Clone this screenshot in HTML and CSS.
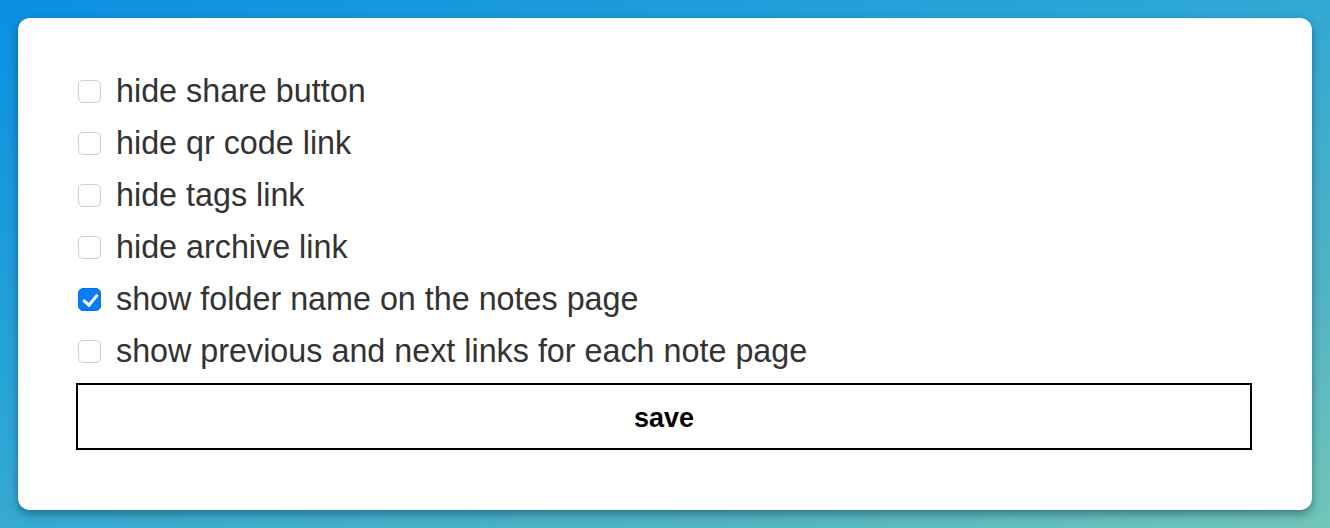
FILE: index.html
```html
<!DOCTYPE html>
<html lang="en">
<head>
  <meta charset="UTF-8" />
  <title>Settings</title>
  <link rel="stylesheet" href="styles.css">
</head>
<body>
  <form class="card">
    <label class="opt"><input type="checkbox" class="opt-box"> hide share button</label>
    <label class="opt"><input type="checkbox" class="opt-box"> hide qr code link</label>
    <label class="opt"><input type="checkbox" class="opt-box"> hide tags link</label>
    <label class="opt"><input type="checkbox" class="opt-box"> hide archive link</label>
    <label class="opt"><input type="checkbox" class="opt-box" checked> show folder name on the notes page</label>
    <label class="opt"><input type="checkbox" class="opt-box"> show previous and next links for each note page</label>
    <button type="button" class="save-btn">save</button>
  </form>
</body>
</html>
```

FILE: styles.css
```css
* { box-sizing: border-box; margin: 0; padding: 0; }

html, body {
  height: 100%;
}

body {
  background: linear-gradient(160deg, #0a8fe2 0%, #2ea7d6 45%, #4fb3c4 75%, #72c6b8 100%);
  padding: 18px;
  font-family: "Liberation Sans", Arial, sans-serif;
  color: #333;
  overflow: hidden;
}

.card {
  background: white;
  border-radius: 12px;
  height: 492px;
  padding: 47px 60px 60px 58px;
  display: flex;
  flex-direction: column;
  box-shadow: 0 4px 10px rgba(0, 40, 60, 0.45);
}

.opt {
  display: flex;
  align-items: center;
  height: 52px;
  font-size: 32.3px;
  cursor: pointer;
}

.opt-box {
  appearance: none;
  -webkit-appearance: none;
  width: 23px;
  height: 23px;
  margin: 0 15px 0 2px;
  border: 1px solid #cfcfcf;
  border-radius: 5px;
  background: #fff;
  box-shadow: inset 0 -1px 1px rgba(0, 0, 0, 0.03);
  position: relative;
  flex-shrink: 0;
}

.opt-box:checked {
  background: #0a7cf7;
  border-color: #0a72e4;
}

.opt-box:checked::after {
  content: "";
  position: absolute;
  left: 7px;
  top: 2px;
  width: 6px;
  height: 12px;
  border: solid white;
  border-width: 0 3px 3px 0;
  transform: rotate(40deg);
}

.save-btn {
  margin-top: 6px;
  height: 67px;
  padding-top: 3px;
  background: white;
  border: 2px solid black;
  font-family: "Liberation Sans", Arial, sans-serif;
  font-weight: bold;
  font-size: 27px;
  color: black;
  cursor: pointer;
}
```
